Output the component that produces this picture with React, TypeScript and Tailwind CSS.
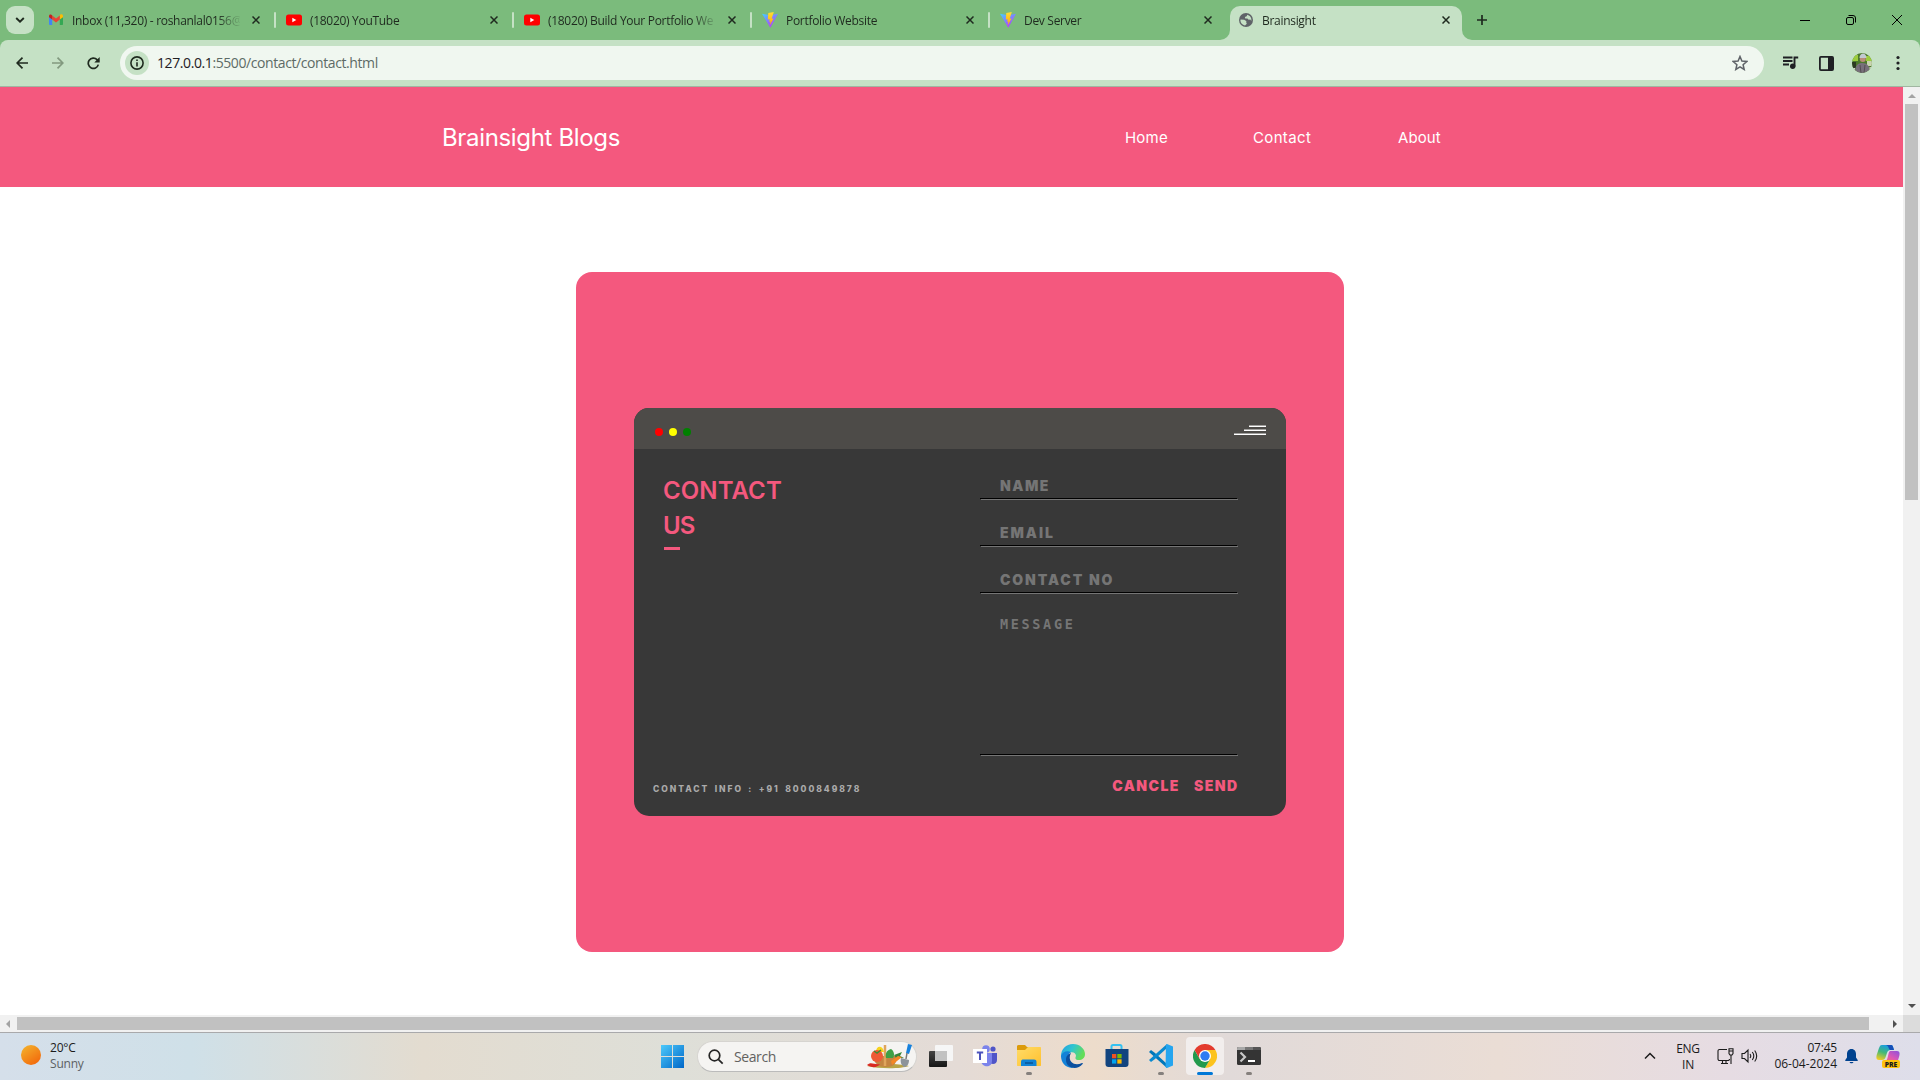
import React from "react";

const UI = "font-['Open_Sans','Noto_Sans',sans-serif]";

function CloseX() {
  return (
    <svg width="8" height="8" viewBox="0 0 8 8" className="shrink-0">
      <path d="M.5.5l7 7M7.5.5l-7 7" stroke="#1f2a1f" strokeWidth="1.5" />
    </svg>
  );
}

function GmailIcon() {
  return (
    <svg width="16" height="16" viewBox="0 0 16 16">
      <path d="M1 4v8.200c0 .5.4.8.8.8H4.200V6.400z" fill="#4285f4" />
      <path d="M11.800 6.400V13h2.400c.5 0 .8-.4.8-.8V4z" fill="#34a853" />
      <path d="M11.800 3.600v4l3.200-2.400V4c0-1.700-1.700-2.200-2.800-1.300z" fill="#fbbc04" />
      <path d="M4.200 7.600v-4.100l3.800 2.900 3.800-2.900v4.100L8 10.500z" fill="#ea4335" />
      <path d="M1 4v1.200l3.200 2.400V3.500l-.6-.6C2.400 2 1 2.600 1 4z" fill="#c5221f" />
    </svg>
  );
}

function YoutubeIcon() {
  return (
    <svg width="16" height="16" viewBox="0 0 16 16">
      <rect x="0" y="2.500" width="16" height="11" rx="2.500" fill="#f00" />
      <path d="M6.300 5.700v4.600l4-2.300z" fill="#fff" />
    </svg>
  );
}

function ViteIcon() {
  return (
    <svg width="16" height="16" viewBox="0 0 16 16">
      <defs>
        <linearGradient id="vite-body" x1="0" y1="0" x2=".6" y2="1">
          <stop offset="0" stopColor="#41d1ff" />
          <stop offset="1" stopColor="#bd34fe" />
        </linearGradient>
        <linearGradient id="vite-bolt" x1="0" y1="0" x2="0" y2="1">
          <stop offset="0" stopColor="#ffdd35" />
          <stop offset="1" stopColor="#ffa800" />
        </linearGradient>
      </defs>
      <path d="M0 1.800L8 3.200l8-1.400L8.300 15.800z" fill="url(#vite-body)" />
      <path d="M11.800 0L6.300 1.100 5.800 7.500l1.900-.3-.5 2.500 1.300-.3-.9 4.100 4-7.100-1.900.3z" fill="url(#vite-bolt)" />
    </svg>
  );
}

function GlobeIcon() {
  return (
    <svg width="16" height="16" viewBox="0 0 16 16" className="shrink-0">
      <circle cx="8" cy="8" r="7" fill="#5f6368" />
      <path d="M2.600 7.600l3.600.2 2.300 1.500-.6 1.300 1 .2-.4 1.300-1.500 1.300c-2.600-.3-4.500-2.500-4.600-4.900zM9.300 2.700l-.6 1.600-1.800.6.3 1.600 2.200.1 1.300 1.100 1.700-.2.900 1.500c.6-2.900-1-5.400-4-6.300z" fill="#c5e1c5" />
    </svg>
  );
}

const tabs = [
  { title: "Inbox (11,320) - roshanlal0156@", icon: <GmailIcon /> },
  { title: "(18020) YouTube", icon: <YoutubeIcon /> },
  { title: "(18020) Build Your Portfolio We", icon: <YoutubeIcon /> },
  { title: "Portfolio Website", icon: <ViteIcon /> },
  { title: "Dev Server", icon: <ViteIcon /> },
];

const tabTitle =
  "ml-2 mt-[2px] h-5 w-[168px] shrink-0 whitespace-nowrap text-[12px] leading-[20px] tracking-[-0.3px] text-[#1f2a1f] [mask-image:linear-gradient(to_right,black_145px,transparent_170px)]";

function TabStrip() {
  return (
    <div className="flex h-10 bg-[#7bbb7c]">
      <div className="mt-1.5 ml-1.5 flex h-7 w-7 shrink-0 items-center justify-center rounded-[9px] bg-[#c5e1c5]">
        <svg width="10" height="6" viewBox="0 0 10 6"><path d="M1.200 1L5 4.700 8.800 1" fill="none" stroke="#1f2a1f" strokeWidth="1.900" /></svg>
      </div>
      <div className="ml-1 flex">
        {tabs.map((t, i) => (
          <div key={i} className="flex h-10 w-[238px] items-center pl-[10px]">
            <div className="w-4 shrink-0">{t.icon}</div>
            <div className={tabTitle}>{t.title}</div>
            <div className="ml-[12px] flex"><CloseX /></div>
            <div className={i < 4 ? "ml-[14px] h-4 w-[2px] shrink-0 rounded-sm bg-[#c5e1c5]" : "hidden"} />
          </div>
        ))}
        <div className="relative mt-1.5 ml-[2px] flex h-[34px] w-[232px] items-center rounded-t-[10px] bg-[#c5e1c5] pb-[6px] pl-2">
          <svg className="absolute bottom-0 -left-[10px]" width="10" height="10"><path d="M10 0v10H0A10 10 0 0 0 10 0z" fill="#c5e1c5" /></svg>
          <svg className="absolute -right-[10px] bottom-0" width="10" height="10"><path d="M0 0v10h10A10 10 0 0 1 0 0z" fill="#c5e1c5" /></svg>
          <GlobeIcon />
          <div className={tabTitle}>Brainsight</div>
          <div className="ml-[12px]"><CloseX /></div>
        </div>
      </div>
      <svg className="mt-[15px] ml-[15px]" width="10" height="10" viewBox="0 0 10 10"><path d="M5 0v10M0 5h10" stroke="#1f2a1f" strokeWidth="1.700" /></svg>
      <div className="mr-[18px] ml-auto flex items-center gap-9 text-black">
        <svg width="10" height="10" viewBox="0 0 10 10"><path d="M0 5.500h10" stroke="currentColor" /></svg>
        <svg width="10" height="10" viewBox="0 0 10 10" fill="none" stroke="currentColor"><rect x=".5" y="2.500" width="7" height="7" rx="1.500" /><path d="M2.500 .5h4.500a2.500 2.500 0 0 1 2.500 2.500V7.500" /></svg>
        <svg width="10" height="10" viewBox="0 0 10 10"><path d="M0 0l10 10M10 0L0 10" stroke="currentColor" /></svg>
      </div>
    </div>
  );
}

function Toolbar() {
  return (
    <div className="bg-[#7bbb7c]">
      <div className="flex h-[47px] items-center rounded-t-[8px] border-b border-[#a0b6a1] bg-[#c5e1c5]">
        <svg className="ml-4" width="12" height="12" viewBox="0 0 12 12" fill="none" stroke="#1f2a1f" strokeWidth="1.700"><path d="M12 6H1M6.500 .6L1.200 6l5.300 5.400" /></svg>
        <svg className="ml-6" width="12" height="12" viewBox="0 0 12 12" fill="none" stroke="#82997f" strokeWidth="1.700"><path d="M0 6h11M5.500 .6L10.800 6l-5.300 5.400" /></svg>
        <svg className="ml-[23px]" width="13" height="13" viewBox="0 0 13 13"><path d="M11.300 7.600A5.100 5.100 0 1 1 10 2.700L11.800 4.500" fill="none" stroke="#1f2a1f" strokeWidth="1.700" /><path d="M12.700 0v5.400H7.300z" fill="#1f2a1f" /></svg>
        <div className="ml-5 flex h-[34px] w-[1644px] items-center rounded-full bg-[#f0f7f0] pl-[5px]">
          <div className="flex h-6 w-6 items-center justify-center rounded-full bg-[#c5e1c5]">
            <svg width="14" height="14" viewBox="0 0 14 14"><circle cx="7" cy="7" r="6.100" fill="none" stroke="#1f2a1f" strokeWidth="1.600" /><path d="M7 6.200v4.200M7 3.500v1.600" stroke="#1f2a1f" strokeWidth="1.600" /></svg>
          </div>
          <div className="ml-2 text-[14px] leading-[20px] tracking-[-0.41px] whitespace-nowrap text-[#5d6b66]">
            <span className="text-[#1f2024]">127.0.0.1</span>:5500/contact/contact.html
          </div>
          <svg className="mr-4 ml-auto" width="16" height="16" viewBox="0 0 16 16"><path d="M8 1.500l1.900 4.600 4.900.4-3.700 3.200 1.100 4.800L8 11.900l-4.200 2.600 1.100-4.800L1.200 6.500l4.900-.4z" fill="none" stroke="#5f6368" strokeWidth="1.500" /></svg>
        </div>
        <svg className="ml-[18px]" width="17" height="14" viewBox="0 0 17 14"><path d="M1 1.500h9.500M1 5h9.500M1 8.500h6" stroke="#1f2024" strokeWidth="1.800" /><circle cx="10.700" cy="10.300" r="2.700" fill="#1f2024" /><path d="M12.500 10.500V1.500h3.700" fill="none" stroke="#1f2024" strokeWidth="1.900" /></svg>
        <svg className="ml-5" width="15" height="15" viewBox="0 0 15 15"><rect x=".9" y=".9" width="13.200" height="13.200" rx="1" fill="none" stroke="#1f2024" strokeWidth="1.800" /><path d="M9 1h5v13H9z" fill="#1f2024" /></svg>
        <svg className="ml-[18px]" width="20" height="20" viewBox="0 0 20 20">
          <clipPath id="avatar"><circle cx="10" cy="10" r="10" /></clipPath>
          <g clipPath="url(#avatar)">
            <path d="M0 0h20v20H0z" fill="#4d7a2c" /><path d="M0 2h6v6H0zM14 3h6v5h-6z" fill="#9ccc3d" /><path d="M0 9h4v6H0z" fill="#2d3b22" /><path d="M15 8h5v5h-5z" fill="#c9d4b0" />
            <path d="M3 20c0-8 3-10 7.500-10S18 13 18 20z" fill="#77707a" /><circle cx="10.800" cy="6" r="3" fill="#b98d78" /><path d="M7.500 5c0-6 7-6 7 0z" fill="#c3cad2" /><path d="M8 12l1 8M13 12l-1 8" stroke="#554c53" />
            <path d="M0 15h3v5H0zM17.500 14H20v6h-2.500z" fill="#d8d8cf" />
          </g>
        </svg>
        <svg className="ml-6" width="4" height="16" viewBox="0 0 4 16" fill="#1f2024"><circle cx="2" cy="2.500" r="1.600" /><circle cx="2" cy="8" r="1.600" /><circle cx="2" cy="13.500" r="1.600" /></svg>
      </div>
    </div>
  );
}

function Underline() {
  return <div className="h-px w-[257px] shrink-0 bg-black shadow-[1px_1px_0_#757575]" />;
}

function Field({ label, tracking }: { label: string; tracking: string }) {
  return (
    <div className="mb-[19px] flex h-7 w-[257px] flex-col justify-end">
      <div className={`h-6 pl-5 text-[14px] leading-[24px] font-black text-[#757575] ${tracking}`}>{label}</div>
      <Underline />
    </div>
  );
}

function ContactPage() {
  return (
    <div className="flex h-[928px] flex-col items-start bg-white font-['Inter',sans-serif]">
      <header className="flex h-[100px] w-[1903px] shrink-0 items-center bg-[#f4587e] text-white">
        <div className="mt-px ml-[442px] text-[24px] leading-[32px] tracking-[-0.34px] whitespace-nowrap">Brainsight Blogs</div>
        <nav className="ml-auto flex w-[778px] pt-[2px] text-[15px] leading-[20px]">
          <a className="w-[128px] tracking-[0.2px]">Home</a>
          <a className="w-[145px] tracking-[0.35px]">Contact</a>
          <a className="tracking-[0.1px]">About</a>
        </nav>
      </header>
      <main className="mt-[85px] ml-[576px] flex h-[680px] w-[768px] shrink-0 items-center justify-center rounded-[16px] bg-[#f4587e]">
        <section className="h-[408px] w-[652px] overflow-hidden rounded-[15px] bg-[#383838]">
          <div className="flex h-[41px] items-center bg-[#4d4b48] pr-5 pl-[20.5px]">
            <div className="mt-[6px] flex gap-[6px]">
              <i className="h-2 w-2 rounded-full bg-[red]" />
              <i className="h-2 w-2 rounded-full bg-[yellow]" />
              <i className="h-2 w-2 rounded-full bg-[green]" />
            </div>
            <div className="mt-[3px] ml-auto flex flex-col items-end gap-[2px]">
              <i className="h-[2px] w-[17px] border-t border-[#a09f9d] bg-white" />
              <i className="h-[2px] w-[22px] border-t border-[#a09f9d] bg-white" />
              <i className="h-[2px] w-8 border-t border-[#a09f9d] bg-white" />
            </div>
          </div>
          <div className="flex h-[367px]">
            <div className="flex w-[346px] flex-col">
              <h1 className="mt-[24px] ml-[29px] text-[24px] leading-[35px] font-semibold text-[#f4587e]">
                <span className="tracking-[0.1px]">CONTACT</span><br /><span className="tracking-[-0.8px]">US</span>
              </h1>
              <div className="mt-1 ml-[30px] h-[3px] w-4 bg-[#f4587e]" />
              <div className="mt-auto mb-[20px] ml-[19px] text-[8.5px] leading-[14px] font-extrabold tracking-[1.95px] whitespace-nowrap text-[#aaa] [word-spacing:1.6px]">CONTACT INFO : +91 8000849878</div>
            </div>
            <form className="pt-[22px]">
              <Field label="NAME" tracking="tracking-[1.5px]" />
              <Field label="EMAIL" tracking="tracking-[1.95px]" />
              <Field label="CONTACT NO" tracking="tracking-[1.9px]" />
              <div className="flex h-[143px] w-[257px] flex-col justify-between">
                <div className="pl-5 font-['DejaVu_Sans_Mono',monospace] text-[13.5px] leading-[24px] font-bold tracking-[2.650px] text-[#757575]">MESSAGE</div>
                <Underline />
              </div>
              <div className="mt-[19px] flex w-[258.5px] justify-end gap-[14px] text-[14px] leading-[24px] font-black tracking-[1.45px] text-[#f4587e]">
                <span>CANCLE</span><span>SEND</span>
              </div>
            </form>
          </div>
        </section>
      </main>
    </div>
  );
}

function Taskbar() {
  return (
    <div className="flex h-12 border-t border-[#a9a9ab] bg-[linear-gradient(90deg,#d5dfea_0%,#cfe0e8_10%,#e3dcd0_22%,#dedfd8_35%,#e4dbd6_50%,#eddccb_57%,#e1dad9_64%,#eaddd5_78%,#e6dce3_90%,#dedeea_100%)] text-[#1b1b1b]">
      <svg className="mt-3 ml-[21px]" width="20" height="20"><defs><linearGradient id="sun" x1="0" y1="0" x2=".7" y2="1"><stop stopColor="#f3b72f" /><stop offset="1" stopColor="#f36a0c" /></linearGradient></defs><circle cx="10" cy="10" r="10" fill="url(#sun)" /></svg>
      <div className="mt-[7px] ml-[9px] w-[100px] text-[12px] leading-[16px] tracking-[-0.200px]"><div>20°C</div><div className="text-[#5c5f63]">Sunny</div></div>
      <svg className="mt-3 ml-[510px] shrink-0" width="24" height="24"><defs><linearGradient id="win" x1="0" y1="0" x2="1" y2="1"><stop stopColor="#4cc9fb" /><stop offset="1" stopColor="#0067c8" /></linearGradient></defs><path d="M1 0h11v11H1zM13 0h11v11H13zM1 12h11v11H1zM13 12h11v11H13z" fill="url(#win)" /></svg>
      <div className="mt-2 ml-[13px] flex h-[31px] w-[220px] shrink-0 items-center rounded-full border border-b-[#bbb] border-[#d6d4d0] bg-[#f5f4f2] pl-[10px]">
        <svg width="16" height="16" fill="none" stroke="#252525" strokeWidth="1.700"><circle cx="6.500" cy="6.500" r="5.300" /><path d="M10.300 10.300l4.400 4.400" /></svg>
        <span className="-mt-px ml-[10px] text-[14px] tracking-[-0.400px] text-[#63625f]">Search</span>
        <svg className="ml-auto mr-[4px]" width="46" height="26" viewBox="0 0 46 26">
          <path d="M1 22c10-2 28-3 42 0-8 3-30 3-42 0z" fill="#b9a447" />
          <path d="M7 12h24c0 8-4 11-11 11S8 20 7 12z" fill="#c38442" /><path d="M19 1v21" stroke="#dfa55d" strokeWidth="2.500" />
          <path d="M10 8c0-7 7-7 8 0z" fill="#f7d31f" /><circle cx="11" cy="12" r="6" fill="#ee5a36" /><path d="M8 7l3 2 4-3" stroke="#3c8c37" strokeWidth="1.500" fill="none" />
          <path d="M20 14c-1-5 1-8 5-9 3 2 4 6 2 9z" fill="#3fa046" /><path d="M28 11l8-3-2 4 4 2-8 0z" fill="#37853c" /><path d="M36 13l-10 8-1-4 7-5z" fill="#f48725" />
          <path d="M1 21c4-4 7 0 13-1-3 4-8 4-13 1z" fill="#d92a22" />
          <path d="M42 0l4 1-3 9-3-1z" fill="#1681dd" /><path d="M41 9l-1 6" stroke="#777" strokeWidth="1.500" /><path d="M35 14l8 2c0 5-3 7-5 7-3-2-4-5-3-9z" fill="#8d949b" />
        </svg>
      </div>
      <div className="flex h-full pl-[2px]">
        {apps.map((a) => (
          <div key={a.name} className={a.active ? "mx-[3px] mt-1 flex h-[38px] w-[38px] flex-col items-center rounded-[4px] bg-[#f2eeed] pt-[7px]" : "mx-0 flex w-11 flex-col items-center pt-[11px]"}>
            {a.icon}
            <div className={a.active ? "mt-1 h-[3px] w-4 rounded-full bg-[#0078d7]" : a.open ? "mt-1 h-[3px] w-[6px] rounded-full bg-[#85807d]" : "hidden"} />
          </div>
        ))}
      </div>
      <div className="ml-auto flex pr-5">
        <svg className="mt-[19px]" width="12" height="8"><path d="M1 6.500L6 1.500l5 5" fill="none" stroke="#1b1b1b" strokeWidth="1.500" /></svg>
        <div className="mt-[8px] ml-[16px] w-[32px] text-center text-[12px] leading-[16px] tracking-[-0.300px]">ENG<br />IN</div>
        <svg className="mt-[15px] ml-[13px]" width="17" height="17" fill="none" stroke="#1b1b1b" strokeWidth="1.100"><path d="M10 1.500H2.500a1.500 1.500 0 0 0-1.500 1.500V11a1.500 1.500 0 0 0 1.500 1.500H11a1.500 1.500 0 0 0 1.500-1.500M4 15.500h7M5.500 13v2.500M9 13v2.500M12 .8h4V5.500l-1 1.500h-2L12 5.500zM12 3h4M14 7v9" /></svg>
        <svg className="mt-[15px] ml-[7px]" width="18" height="16" fill="none" stroke="#1b1b1b" strokeWidth="1.100"><path d="M1 5.500h2.500L7 2v12L3.500 10.500H1zM9 6q1.500 2 0 4M11.300 4q3 4 0 8M13.700 2.500q4 5.500 0 11" /></svg>
        <div className="mt-[7px] ml-[8px] w-[70px] text-right text-[12px] leading-[16px] tracking-[0px] whitespace-nowrap"><span className="tracking-[-0.2px]">07:45</span><br />06-04-2024</div>
        <svg className="mt-4 ml-2" width="13" height="15" fill="#00428f"><path d="M6.500 0C3.500 0 2 2.500 2 5v3.500L.3 11v1h12.400v-1L11 8.500V5c0-2.500-1.500-5-4.500-5zM4.500 13h4c-.5 1.700-3.500 1.700-4 0z" /></svg>
        <CopilotIcon />
      </div>
    </div>
  );
}

function CopilotIcon() {
  return (
    <svg className="mt-[11px] ml-[18px]" width="24" height="24" viewBox="0 0 24 24">
      <defs>
        <linearGradient id="cp1" x1=".6" y1="0" x2=".2" y2="1"><stop stopColor="#169be8" /><stop offset=".5" stopColor="#42b879" /><stop offset="1" stopColor="#f5cc21" /></linearGradient>
        <linearGradient id="cp2" x1="1" y1="0" x2=".3" y2="1"><stop stopColor="#8951dc" /><stop offset=".5" stopColor="#dc57b5" /><stop offset="1" stopColor="#ff795a" /></linearGradient>
      </defs>
      <path d="M6 1h9c2 0 2 2 3 5h-4c-2 0-3 2-4 6-1 3-2 4-4 4H3c-3 0-3-3-2-6l2-6c1-2 1-3 3-3z" fill="url(#cp1)" />
      <path d="M10 1h5c2 0 2 2 3 5h-4c-2-2-1-4-4-5z" fill="#1750b8" />
      <path d="M15 7h6c3 0 3 3 2 6l-2 6c-1 2-2 3-4 3H9c-2 0-2-2-2-4 3 0 4-2 5-6s1-5 3-5z" fill="url(#cp2)" />
      <rect x="6" y="16" width="18" height="8" rx="2" fill="#ffc20e" />
      <text x="15" y="22.500" textAnchor="middle" fontFamily="Open Sans, sans-serif" fontSize="6.800" fontWeight="800" fill="#1b1b1b">PRE</text>
    </svg>
  );
}

const apps: { name: string; icon: React.ReactNode; open?: boolean; active?: boolean }[] = [
  { name: "task-view", icon: <svg width="24" height="24"><defs><linearGradient id="tv" x2="0" y2="1"><stop stopColor="#444" /><stop offset="1" stopColor="#161616" /></linearGradient></defs><rect x="0" y="7" width="18" height="16" rx="1" fill="url(#tv)" /><rect x="6" y="1" width="18" height="16" rx="1" fill="#f6f6f6" /><path d="M6 7h12v10H6z" fill="#c2c2c2" /></svg> },
  { name: "teams", icon: <svg width="24" height="24"><circle cx="20" cy="5" r="2.600" fill="#4f55c8" /><circle cx="13" cy="5" r="3.800" fill="#7b83eb" /><path d="M17 9h7v7c0 4-4 5-7 3z" fill="#4f55c8" /><path d="M8 9h11v8c0 7-10 7-11 0z" fill="#7b83eb" /><rect y="5" width="14" height="14" fill="#fff" /><path d="M3.800 8.500h6.400M7 8.500v7.500" stroke="#4b53bc" strokeWidth="2" /></svg> },
  { name: "explorer", open: true, icon: <svg width="24" height="24"><defs><linearGradient id="fold" x2="1" y2="1"><stop stopColor="#ffdc68" /><stop offset="1" stopColor="#ffc02e" /></linearGradient></defs><path d="M0 3c0-1 0-2 1.500-2H8l2 2h12v6H0z" fill="#dc9b0c" /><path d="M0 6h8l3-3h12c1 0 1 .5 1 1.500V20.500c0 1 0 1.500-1 1.500H1c-1 0-1-.5-1-1.500z" fill="url(#fold)" /><path d="M4 22v-4c0-2 1-2.500 2.500-2.500h10.500c2 0 2.500 1 2.500 2.500v4z" fill="#1183d6" /><path d="M8 19h8" stroke="#0b5fa5" strokeWidth="2" /></svg> },
  { name: "edge", icon: <svg width="24" height="24"><defs><linearGradient id="e1" x2="1" y2=".4"><stop stopColor="#229ce5" /><stop offset=".5" stopColor="#30c5cf" /><stop offset="1" stopColor="#63dd58" /></linearGradient></defs><path d="M0 12C0 5 5 0 12 0s12 5 12 10c0 4-3 6-6 6-4 0-4-2-3-4 0-4-5-5-9-2-3 3-5 5-6 2z" fill="url(#e1)" /><path d="M0 12c1-4 6-6 10-4-6 4-5 14 3 16C5 24.500 0 19 0 12z" fill="#1382d8" /><path d="M10 9c-4 7 2 14 11 10 1 0 1 .3.600 1C16 27 5 24 5 16c0-4 2-6 5-7z" fill="#0b4f9f" /></svg> },
  { name: "store", icon: <svg width="24" height="24"><path d="M6.500 8V2.500Q6.500 1 8 1h7q1.500 0 1.500 1.500V8" fill="none" stroke="#35c1f1" strokeWidth="2" /><path d="M.5 5h23v15q0 3-3 3h-17q-3 0-3-3z" fill="#12447f" /><path d="M7 10h4.300v4.300H7z" fill="#f25022" /><path d="M12.300 10h4.300v4.300h-4.300z" fill="#7fba00" /><path d="M7 15.300h4.300v4.300H7z" fill="#00a4ef" /><path d="M12.300 15.300h4.300v4.300h-4.300z" fill="#ffb900" /></svg> },
  { name: "vscode", open: true, icon: <svg width="24" height="24"><path d="M0 8l2-2 4 3L18 20v4z" fill="#0077b9" /><path d="M0 16l2 2 4-3L18 4V0z" fill="#0a8ad0" /><path d="M18 0l6 2.500v19L18 24l-1.500-1 .5-22z" fill="#25a5ef" /></svg> },
  { name: "chrome", active: true, icon: <svg width="24" height="24" viewBox="0 0 24 24"><path d="M12 6h10.400A12 12 0 0 1 12 24l5.200-9z" fill="#fcc31e" /><path d="M1.600 6l5.200 9 10.400 0L12 24A12 12 0 0 1 1.600 6z" fill="#229a4d" /><path d="M1.600 6A12 12 0 0 1 22.400 6H12L6.800 15z" fill="#e33b2e" /><circle cx="12" cy="12" r="6" fill="#fff" /><circle cx="12" cy="12" r="4.700" fill="#2e7cf2" /></svg> },
  { name: "terminal", open: true, icon: <svg width="24" height="24"><rect y="3" width="24" height="18" rx="1.500" fill="#343434" /><path d="M0 6V4.500Q0 3 1.500 3H8v3z" fill="#a9a9a9" /><path d="M8 3h8v3H8z" fill="#777" /><path d="M16 3h6.500Q24 3 24 4.500V6h-8z" fill="#555" /><path d="M3.500 8.500L8 13l-4.500 4.500" fill="none" stroke="#c8c8c8" strokeWidth="2.200" /><path d="M11 17h7" stroke="#fff" strokeWidth="2" /></svg> },
];

export default function App() {
  return (
    <div className={`flex h-[1080px] w-[1920px] flex-col overflow-hidden ${UI}`}>
      <TabStrip />
      <Toolbar />
      <div className="flex h-[928px] shrink-0">
        <div className="w-[1903px] overflow-hidden"><ContactPage /></div>
        <div className="flex w-[17px] flex-col items-center bg-[#f1f1f1]">
          <svg className="mt-[6px]" width="8" height="5"><path d="M0 5l4-4 4 4z" fill="#a3a3a3" /></svg>
          <div className="mt-[6px] h-[396px] w-[13px] bg-[#c1c1c1]" />
          <svg className="mt-auto mb-[6px]" width="8" height="5"><path d="M0 0l4 4 4-4z" fill="#505050" /></svg>
        </div>
      </div>
      <div className="flex h-[17px] shrink-0 items-center bg-[#f1f1f1]">
        <svg className="ml-[6px]" width="5" height="8"><path d="M4 0L0 4l4 4z" fill="#a3a3a3" /></svg>
        <div className="ml-[6px] h-[13px] w-[1852px] bg-[#c1c1c1]" />
        <svg className="ml-6" width="5" height="8"><path d="M0 0l4 4-4 4z" fill="#505050" /></svg>
        <div className="ml-auto h-full w-[17px] bg-[#dcdcdc]" />
      </div>
      <Taskbar />
    </div>
  );
}
